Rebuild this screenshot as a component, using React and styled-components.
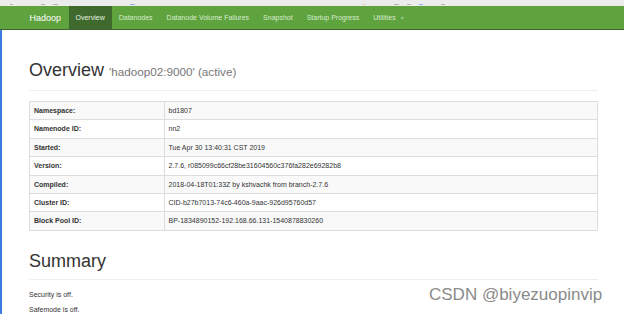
import React from "react";
import styled, { createGlobalStyle } from "styled-components";

const Global = createGlobalStyle`
  html, body {
    margin: 0;
    padding: 0;
    background: #fff;
    font-family: "Liberation Sans", Arial, sans-serif;
    color: #333;
  }
`;

const Window = styled.div`
  position: relative;
  width: 624px;
  height: 314px;
  overflow: hidden;
  background: #fff;
`;

const Chrome = styled.div`
  height: 6px;
  background: #ececed;
  display: flex;
  align-items: flex-end;
  gap: 8px;
  padding-left: 10px;
  box-sizing: border-box;
`;

const ChromeMark = styled.span`
  display: block;
  width: ${(p) => p.w || 4}px;
  height: 1px;
  margin-left: ${(p) => p.gap || 0}px;
  margin-bottom: 1px;
  background: ${(p) => p.c || "#b4b4b4"};
`;

const Navbar = styled.nav`
  height: 23px;
  background: #5fa33e;
  border-bottom: 1px solid #3f6530;
  display: flex;
  align-items: stretch;
  padding-left: 22px;
`;

const Brand = styled.span`
  display: flex;
  align-items: center;
  padding: 0 7.5px;
  font-size: 9px;
  color: #fff;
`;

const NavLink = styled.a`
  display: flex;
  align-items: center;
  padding: 0 7px;
  font-size: 7px;
  color: ${(p) => (p.active ? "#e8f3e2" : "#d8ebcf")};
  background: ${(p) => (p.active ? "#3e6a2e" : "transparent")};
  text-decoration: none;
`;

const Caret = styled.span`
  margin-left: 4px;
  font-size: 5px;
  color: #a9cf98;
`;

const Main = styled.main`
  border-left: 2px solid #3c7be0;
  height: 284px;
  padding: 30px 0 0 27px;
  box-sizing: border-box;
  width: 598px;
`;

const Title = styled.h1`
  margin: 0;
  font-size: 18px;
  font-weight: 400;
  line-height: 20px;
  height: 20px;
  color: #333;
  padding-bottom: ${(p) => p.pb}px;
  border-bottom: 1px solid #eee;
`;

const Small = styled.small`
  font-size: 11.7px;
  line-height: 1;
  color: #777;
`;

const Table = styled.table`
  margin-top: 10px;
  width: 100%;
  border-collapse: collapse;
  border: 1px solid #ddd;
  font-size: 7px;
`;

const Row = styled.tr`
  background: ${(p) => (p.odd ? "#f9f9f9" : "#fff")};
`;

const Cell = styled.td`
  border: 1px solid #ddd;
  padding: 4px 4.5px 4px 4px;
  height: 9.4px;
  line-height: 9.4px;
  color: #333;
  font-weight: ${(p) => (p.head ? 700 : 400)};
  width: ${(p) => (p.head ? "125px" : "auto")};
`;

const Section = styled.div`
  margin-top: 20px;
`;

const Para = styled.p`
  margin: 0 0 5px;
  font-size: 7px;
  line-height: 10px;
  color: #333;
`;

const Notes = styled.div`
  margin-top: 10px;
`;

const Watermark = styled.div`
  position: absolute;
  left: 429px;
  top: 285px;
  font-size: 17px;
  line-height: 20px;
  color: #8a8a8a;
  text-shadow: 0 0 2px #fff;
  white-space: nowrap;
`;

const rows = [
  ["Namespace:", "bd1807"],
  ["Namenode ID:", "nn2"],
  ["Started:", "Tue Apr 30 13:40:31 CST 2019"],
  ["Version:", "2.7.6, r085099c66cf28be31604560c376fa282e69282b8"],
  ["Compiled:", "2018-04-18T01:33Z by kshvachk from branch-2.7.6"],
  ["Cluster ID:", "CID-b27b7013-74c6-460a-9aac-926d95760d57"],
  ["Block Pool ID:", "BP-1834890152-192.168.66.131-1540878830260"],
];

const links = [
  "Overview",
  "Datanodes",
  "Datanode Volume Failures",
  "Snapshot",
  "Startup Progress",
];

export default function App() {
  return (
    <Window>
      <Global />

      <Chrome>
        <ChromeMark w={3} />
        <ChromeMark w={4} gap={20} />
        <ChromeMark w={5} />
        <ChromeMark w={5} gap={64} c="#8fb0ec" />
        <ChromeMark w={3} gap={220} c="#efc6a3" />
        <ChromeMark w={5} gap={20} />
        <ChromeMark w={4} />
        <ChromeMark w={4} c="#8fb0ec" />
        <ChromeMark w={4} gap={10} />
      </Chrome>

      <Navbar>
        <Brand>Hadoop</Brand>
        {links.map((l, i) => (
          <NavLink key={l} active={i === 0}>
            {l}
          </NavLink>
        ))}
        <NavLink>
          Utilities<Caret>▼</Caret>
        </NavLink>
      </Navbar>

      <Main>
        <Title pb={10}>
          Overview <Small>'hadoop02:9000' (active)</Small>
        </Title>

        <Table>
          <tbody>
            {rows.map(([k, v], i) => (
              <Row key={k} odd={i % 2 === 0}>
                <Cell head>{k}</Cell>
                <Cell>{v}</Cell>
              </Row>
            ))}
          </tbody>
        </Table>

        <Section>
          <Title pb={8}>Summary</Title>
          <Notes>
            <Para>Security is off.</Para>
            <Para>Safemode is off.</Para>
          </Notes>
        </Section>
      </Main>

      <Watermark>CSDN @biyezuopinvip</Watermark>
    </Window>
  );
}
